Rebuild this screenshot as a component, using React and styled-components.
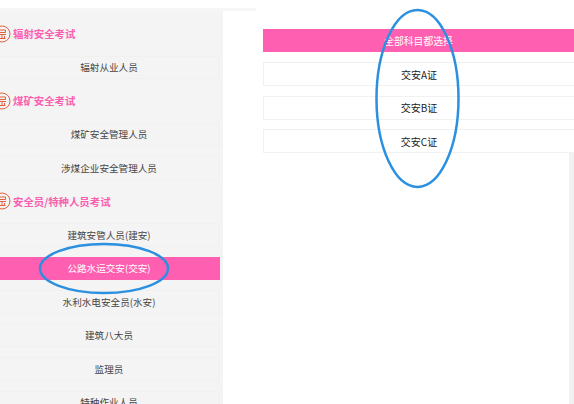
import styled, { createGlobalStyle } from 'styled-components';

const GlobalStyle = createGlobalStyle`
  html, body {
    margin: 0;
    padding: 0;
    background: #fff;
    overflow: hidden;
  }
  body {
    font-family: "Noto Sans CJK SC", "Liberation Sans", sans-serif;
  }
`;

const Page = styled.div`
  position: relative;
  width: 574px;
  height: 404px;
  overflow: hidden;
  background: #fff;
`;

const TopStrip = styled.div`
  width: 256px;
  height: 3px;
  margin-top: 8px;
  background: #f6f6f6;
`;

const Columns = styled.div`
  display: flex;
`;

const Sidebar = styled.div`
  width: 223px;
  height: 393px;
  padding: 11px 3px 0 0;
  box-sizing: border-box;
  background: #f4f4f4;
  overflow: hidden;
`;

const Heading = styled.div`
  display: flex;
  align-items: center;
  gap: 2px;
  height: 23.5px;
  margin: 0 0 10px -7px;
  color: #fb5fb0;
  font-size: 10.4px;
  font-weight: 700;
`;

const Row = styled.div`
  display: flex;
  align-items: center;
  justify-content: center;
  box-sizing: border-box;
  height: 23.5px;
  margin: 0 0 10px -2px;
  border: 1px solid ${props => (props.current ? '#ff5fb0' : '#f0f0f0')};
  background: ${props => (props.current ? '#ff5fb0' : '#f4f4f4')};
  color: ${props => (props.current ? '#fff' : '#444')};
  font-size: 9.6px;
`;

const Content = styled.div`
  flex: 1;
  padding: 18px 0 0 40px;
  position: relative;
`;

const AllButton = styled.div`
  display: flex;
  align-items: center;
  justify-content: center;
  height: 23px;
  margin-bottom: 10px;
  background: #ff5fb0;
  color: #fff;
  font-size: 9.8px;
`;

const Option = styled.div`
  display: flex;
  align-items: center;
  justify-content: center;
  box-sizing: border-box;
  height: 24px;
  margin-bottom: 9.5px;
  border: 1px solid #f1f1f1;
  border-right: 0;
  background: #fff;
  color: #222;
  font-size: 10px;
`;

const ScrollEdge = styled.div`
  position: absolute;
  top: 153px;
  right: 0;
  width: 5px;
  height: 251px;
  background: #f1f1f1;
`;

const Marks = styled.svg`
  position: absolute;
  top: 0;
  left: 0;
  pointer-events: none;
`;

const CertIcon = () => (
  <svg width="18" height="18" viewBox="0 0 18 18" fill="none">
    <circle cx="9" cy="9" r="8" stroke="#e2603f" strokeWidth="1" />
    <path d="M5.5 5h7v2.5h-7zM5 9.5h8M9 9.5v4M5.5 13.5h7M6.5 11v2.5M11.5 11v2.5" stroke="#e2603f" strokeWidth="1" />
  </svg>
);

const groups = [
  { title: '辐射安全考试', items: ['辐射从业人员'] },
  { title: '煤矿安全考试', items: ['煤矿安全管理人员', '涉煤企业安全管理人员'] },
  {
    title: '安全员/特种人员考试',
    items: ['建筑安管人员(建安)', '公路水运交安(交安)', '水利水电安全员(水安)', '建筑八大员', '监理员', '特种作业人员'],
  },
];

const App = () => (
  <Page>
    <GlobalStyle />
    <TopStrip />
    <Columns>
      <Sidebar>
        {groups.map(group => (
          <div key={group.title}>
            <Heading>
              <CertIcon />
              {group.title}
            </Heading>
            {group.items.map(item => (
              <Row key={item} current={item === '公路水运交安(交安)'}>{item}</Row>
            ))}
          </div>
        ))}
      </Sidebar>
      <Content>
        <AllButton>全部科目都选择</AllButton>
        <Option>交安A证</Option>
        <Option>交安B证</Option>
        <Option>交安C证</Option>
      </Content>
    </Columns>
    <ScrollEdge />
    <Marks width="574" height="404" fill="none">
      <ellipse cx="104" cy="268.5" rx="64" ry="24.5" stroke="#2b90e0" strokeWidth="2.5" />
      <ellipse cx="417.5" cy="98.5" rx="41" ry="88.5" stroke="#2b90e0" strokeWidth="2.5" />
    </Marks>
  </Page>
);

export default App;
